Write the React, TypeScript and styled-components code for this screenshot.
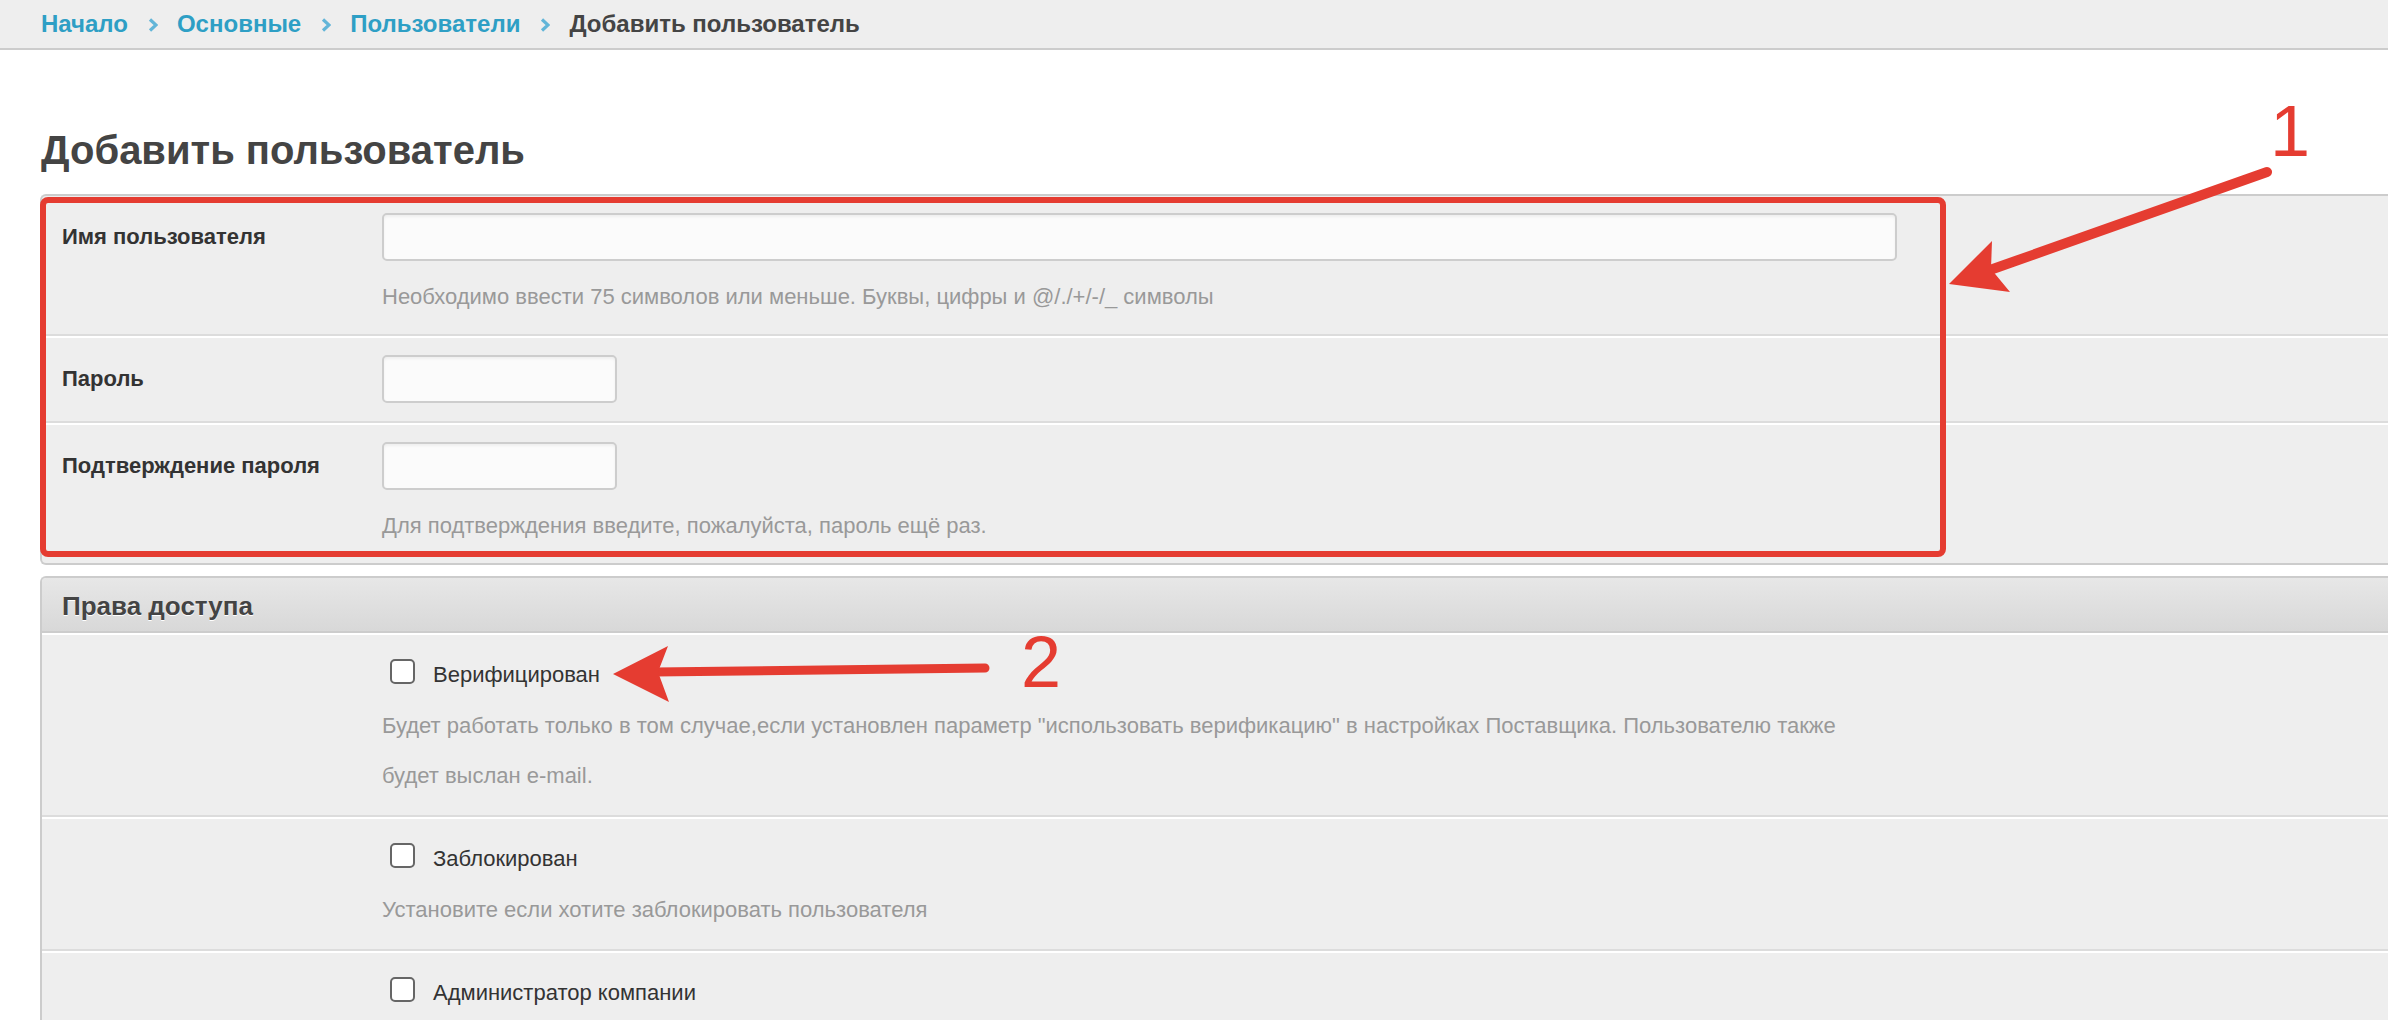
import React from 'react';
import styled, { createGlobalStyle } from 'styled-components';

const GlobalStyle = createGlobalStyle`
  html, body {
    margin: 0;
    padding: 0;
    background: #ffffff;
    overflow: hidden;
  }
  body {
    font-family: 'Liberation Sans', Arial, sans-serif;
    color: #333;
  }
`;

const Page = styled.div`
    position: relative;
    height: 1020px;
    overflow: hidden;
`;

const Crumbs = styled.nav`
    display: flex;
    align-items: center;
    height: 48px;
    padding-left: 41px;
    background: #eeeeee;
    border-bottom: 2px solid #cccccc;
    font-size: 24px;
    font-weight: 700;
    line-height: 48px;
`;

const CrumbLink = styled.a`
    color: #2e9fc5;
    text-decoration: none;
`;

const CrumbCurrent = styled.span`
    color: #444444;
`;

const Chevron = styled.svg`
    flex: none;
    margin: 1px 19px 0 20px;
`;

const Content = styled.main`
    padding-left: 40px;
`;

const Title = styled.h1`
    margin: 77px 0 21px 1px;
    font-size: 40px;
    line-height: 46px;
    font-weight: 700;
    color: #444444;
`;

const Panel = styled.section<{ $gap?: number }>`
    margin-top: ${(p) => p.$gap || 0}px;
    background: #eeeeee;
    border: 2px solid #cccccc;
    border-right: none;
    border-radius: 6px 0 0 6px;
    overflow: hidden;
`;

const PanelHead = styled.h2`
    margin: 0;
    height: 55px;
    padding: 4px 20px 0;
    box-sizing: border-box;
    background: linear-gradient(#e7e7e7, #d8d8d8);
    border-bottom: 2px solid #cccccc;
    font-size: 26px;
    font-weight: 700;
    line-height: 49px;
    color: #444444;
    text-shadow: 0 1px 0 #ffffff;
`;

const FieldRow = styled.div`
    display: grid;
    grid-template-columns: 320px 1fr;
    padding: 17px 0 18px 20px;
    border-top: 2px solid #ffffff;
    border-bottom: 2px solid #dcdcdc;
    &:first-child {
        border-top: none;
    }
    &:last-child {
        border-bottom: none;
    }
`;

const CheckRow = styled(FieldRow)`
    padding: 19px 0 14px 20px;
    &:first-of-type {
        border-top: 2px solid #ffffff;
    }
`;

const Label = styled.label`
    font-size: 22px;
    font-weight: 700;
    line-height: 48px;
    color: #333333;
`;

const Input = styled.input<{ $wide?: boolean }>`
    display: block;
    box-sizing: border-box;
    width: ${(p) => (p.$wide ? '1515px' : '235px')};
    height: 48px;
    margin: 0;
    border: 2px solid #cdcdcd;
    border-radius: 5px;
    background: #fbfbfb;
    box-shadow: inset 0 2px 3px rgba(0, 0, 0, 0.05);
    outline: none;
`;

const Help = styled.p`
    margin: 17px 0 0;
    font-size: 22px;
    line-height: 38px;
    color: #999999;
`;

const CheckHelp = styled(Help)`
    margin-top: 5px;
    max-width: 1515px;
    line-height: 50px;
`;

const CheckLine = styled.label`
    display: flex;
    align-items: center;
    gap: 18px;
    height: 42px;
`;

const Box = styled.input`
    appearance: none;
    flex: none;
    box-sizing: border-box;
    width: 25px;
    height: 25px;
    margin: 0 0 8px 8px;
    border: 2px solid #666666;
    border-radius: 5px;
    background: #ffffff;
`;

const CheckText = styled.span`
    font-size: 22px;
    line-height: 42px;
    color: #333333;
`;

// аннотации поверх скриншота
const RedFrame = styled.div`
    position: absolute;
    left: 40px;
    top: 197px;
    width: 1906px;
    height: 360px;
    box-sizing: border-box;
    border: 6px solid #e53c31;
    border-radius: 8px;
    pointer-events: none;
`;

const Mark = styled.span<{ $x: number; $y: number }>`
    position: absolute;
    left: ${(p) => p.$x}px;
    top: ${(p) => p.$y}px;
    font-size: 72px;
    line-height: 72px;
    color: #e53c31;
    pointer-events: none;
`;

const Arrows = styled.svg`
    position: absolute;
    left: 0;
    top: 0;
    pointer-events: none;
`;

const ChevronIcon = () => (
    <Chevron width="10" height="14" viewBox="0 0 10 14">
        <polyline points="2,1.5 8,7 2,12.5" fill="none" stroke="#62b5d8" strokeWidth="3.2" />
    </Chevron>
);

const rights: { label: string; help?: string }[] = [
    {
        label: 'Верифицирован',
        help: 'Будет работать только в том случае,если установлен параметр "использовать верификацию" в настройках Поставщика. Пользователю также будет выслан e-mail.',
    },
    { label: 'Заблокирован', help: 'Установите если хотите заблокировать пользователя' },
    { label: 'Администратор компании' },
];

function App() {
    return (
        <Page>
            <GlobalStyle />
            <Crumbs>
                <CrumbLink href="#">Начало</CrumbLink>
                <ChevronIcon />
                <CrumbLink href="#">Основные</CrumbLink>
                <ChevronIcon />
                <CrumbLink href="#">Пользователи</CrumbLink>
                <ChevronIcon />
                <CrumbCurrent>Добавить пользователь</CrumbCurrent>
            </Crumbs>
            <Content>
                <Title>Добавить пользователь</Title>
                <Panel>
                    <FieldRow>
                        <Label>Имя пользователя</Label>
                        <div>
                            <Input $wide type="text" />
                            <Help>Необходимо ввести 75 символов или меньше. Буквы, цифры и @/./+/-/_ символы</Help>
                        </div>
                    </FieldRow>
                    <FieldRow>
                        <Label>Пароль</Label>
                        <div>
                            <Input type="password" />
                        </div>
                    </FieldRow>
                    <FieldRow>
                        <Label>Подтверждение пароля</Label>
                        <div>
                            <Input type="password" />
                            <Help>Для подтверждения введите, пожалуйста, пароль ещё раз.</Help>
                        </div>
                    </FieldRow>
                </Panel>
                <Panel $gap={11}>
                    <PanelHead>Права доступа</PanelHead>
                    {rights.map((item, index) => (
                        <CheckRow key={index}>
                            <span />
                            <div>
                                <CheckLine>
                                    <Box type="checkbox" />
                                    <CheckText>{item.label}</CheckText>
                                </CheckLine>
                                {item.help && <CheckHelp>{item.help}</CheckHelp>}
                            </div>
                        </CheckRow>
                    ))}
                </Panel>
            </Content>

            <RedFrame />
            <Mark $x={2270} $y={95}>1</Mark>
            <Mark $x={1021} $y={626}>2</Mark>
            <Arrows width="2388" height="1020" viewBox="0 0 2388 1020">
                <line x1="2267" y1="172" x2="1990" y2="270" stroke="#e53c31" strokeWidth="10" strokeLinecap="round" />
                <polygon points="1949,284 1992,241 1991,269 2010,292" fill="#e53c31" />
                <line x1="985" y1="668" x2="655" y2="672" stroke="#e53c31" strokeWidth="9" strokeLinecap="round" />
                <polygon points="613,674 668,646 658,672 669,702" fill="#e53c31" />
            </Arrows>
        </Page>
    );
}

export default App;
